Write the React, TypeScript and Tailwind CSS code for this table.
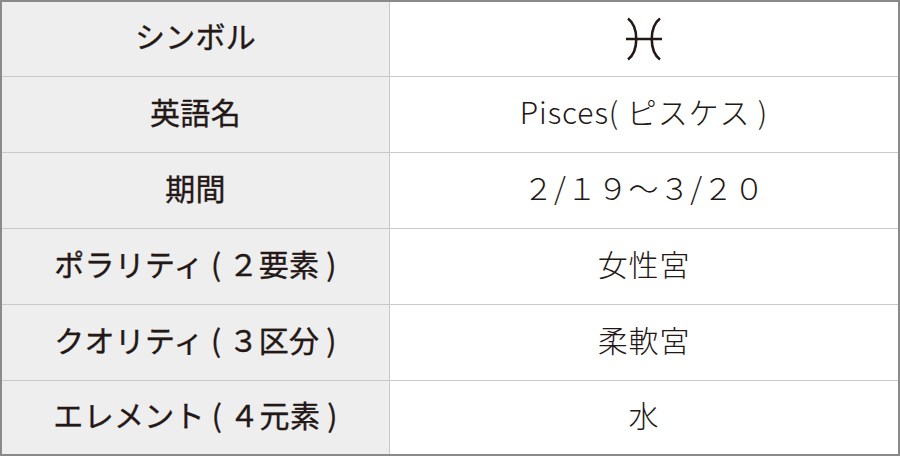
const rows: { label: string; value: React.ReactNode; h: string }[] = [
  { label: "シンボル", value: <PiscesIcon />, h: "h-[75px]" },
  { label: "英語名", value: "Pisces( ピスケス )", h: "h-[76px]" },
  { label: "期間", value: "２/１９〜３/２０", h: "h-[76px]" },
  { label: "ポラリティ ( ２要素 )", value: "女性宮", h: "h-[76px]" },
  { label: "クオリティ ( ３区分 )", value: "柔軟宮", h: "h-[76px]" },
  { label: "エレメント ( ４元素 )", value: "水", h: "h-[73px]" },
];

function PiscesIcon() {
  return (
    <svg className="mt-[6px]" width="38" height="44" viewBox="0 0 38 44" fill="none" stroke="#231815" strokeWidth="2.6">
      <path d="M3 1.5 C 14 10, 14 34, 3 42.5" />
      <path d="M35 1.5 C 24 10, 24 34, 35 42.5" />
      <path d="M1 22 H 37" />
    </svg>
  );
}

export default function App() {
  return (
    <div
      className="w-[900px] h-[456px] border-2 border-[#8a8a8a] bg-white flex flex-col text-[#231815]"
      style={{ fontFamily: '"Noto Sans CJK JP", "Noto Sans", sans-serif' }}
    >
      {rows.map((r, i) => (
        <div
          key={r.label}
          className={`${r.h} flex ${i < rows.length - 1 ? "border-b border-[#c9c9c9]" : ""}`}
        >
          <div className="w-[388px] pb-[7px] bg-[#eeeeee] border-r border-[#c9c9c9] flex items-center justify-center text-[30px] font-normal tracking-[0.01em] [-webkit-text-stroke:0.35px_#231815]">
            {r.label}
          </div>
          <div className="flex-1 pb-[6px] flex items-center justify-center text-[30px] font-light tracking-[0.03em]">
            {r.value}
          </div>
        </div>
      ))}
    </div>
  );
}
